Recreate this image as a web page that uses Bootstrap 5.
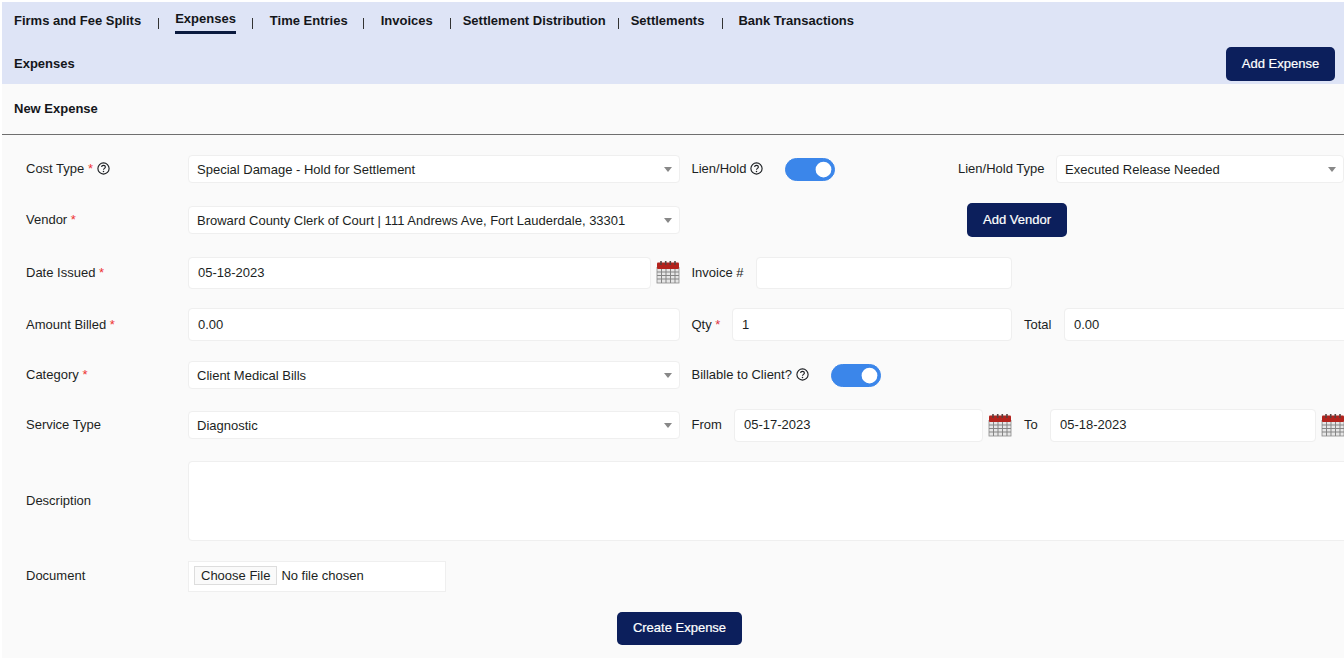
<!DOCTYPE html>
<html lang="en"><head><meta charset="utf-8"><title>New Expense</title>
<link href="https://cdn.jsdelivr.net/npm/bootstrap@5.3.0/dist/css/bootstrap.min.css" rel="stylesheet">
<style>
html,body{height:100%;overflow:hidden;background:#fff}
body{font-family:"Liberation Sans",Arial,sans-serif;font-size:13px;color:#1c1f23;padding:2px 0 2px 2px}
.topband{background:#dee4f6;height:82px;width:1342px}
.tabrow{height:38px;padding-left:12px;gap:0}
.tabrow a{font-weight:700;color:#14161a;font-size:13px;text-decoration:none;padding:0;line-height:16px;margin-top:11px}
.tabrow a.on{margin-top:9px;padding-bottom:4px;border-bottom:3px solid #0a1a3f;height:23px}
.vsep{width:1px;height:11px;background:#333;margin:16px 17px 0;flex:none}
.s1{margin-right:16px}.s2{margin-left:16px}.s3{margin-left:15px;margin-right:17px}
.s4{margin-left:17px;margin-right:12px}.s5{margin-left:12px;margin-right:12px}.s6{margin-left:18px;margin-right:15px}
.bandsub{padding:7px 9px 0 12px;height:44px;margin-top:0}
.bandsub b{margin-top:7px}
.bandsub b,.newhead{font-weight:700;font-size:13px;color:#14161a}
.navbtn{background:#0c1f5c;border:0;color:#fff;border-radius:5px;font-size:13px;font-weight:400;height:34px;padding:0;text-align:center;-webkit-text-stroke:.2px #fff}
.navbtn:hover{background:#0c1f5c;color:#fff}
.sheet{background:#fafafa;height:574px;width:1342px;overflow:hidden}
.newhead{height:51px;line-height:49px;padding-left:12px;border-bottom:1px solid #6f6f6f}
.formarea{padding-left:24px;padding-top:20px;width:1500px}
.frow{display:flex;align-items:center}
.flabel{width:162px;flex:none;color:#1c1f23}
.flabel i{color:#e33;font-style:normal}
.fmain{width:492px;flex:none}
.sel,.txt{border:1px solid #efefef;border-radius:4px;background-color:#fff;font-size:13px;color:#1c1f23;box-shadow:none;padding:0 9px}
.sel{height:28px;min-height:0;line-height:26px;padding:1px 24px 0 8px;background-image:url("data:image/svg+xml,%3Csvg xmlns='http://www.w3.org/2000/svg' viewBox='0 0 10 6'%3E%3Cpath fill='%23888' d='M0 0h10L5 6z'/%3E%3C/svg%3E");background-size:8px 5px;background-position:right 7px center}
.txt{height:33px;min-height:0}
.tog{width:50px!important;height:23px;margin:1px 0 0!important;float:none!important;background-color:#3b86ea!important;border-color:#3b86ea!important;border-radius:12px!important;box-shadow:none!important}
.qmark{width:13px;height:13px;vertical-align:-2px;margin-left:0}
.calico{width:24px;height:24px;flex:none;display:block;margin-bottom:2px}
.filebox{width:258px;height:31px;border:1px solid #efefef;background:#fff;font-size:13px;padding:4px 5px;display:block;color:#1c1f23}
.filebox::file-selector-button{background:#fafafa;border:1px solid #ddd;font-size:13px;padding:1px 6px;height:19px;line-height:15px;margin-right:4px;color:#1c1f23}
.desc{height:80px;resize:none;width:1170px;border-radius:4px}
.flt{margin-left:11.5px}
.addexp{width:109px}
.r1{height:28px}
.r2{margin-top:20px;height:34px}
.r3{margin-top:20px;height:32px}
.r3 .txt{height:32px;padding-bottom:1px}
.r3 .fmain{gap:5px}
.r4{margin-top:19px;height:33px}
.r5{margin-top:20px;height:28px}
.r6{margin-top:20px;height:33px}
.r6 .sel{margin-top:-1px}
.r6 .txt{padding-bottom:2px}
.r6 label,.r8 label{padding-bottom:2px}
.r7{margin-top:19px;height:80px}
.r8{margin-top:20px;height:31px}
.r9{margin-top:20px;padding-left:591px}
.lab-lien{width:93.5px}
.lab-type{margin-left:123px;width:98px}
.sel3{width:288px;flex:none}
.addven{width:100px;margin-left:287px}
.lab-inv{width:64.5px}
.inv{width:256px;flex:none}
.lab-qty{width:40.5px}
.qty{width:280px;flex:none}
.lab-total{width:40px;margin-left:12px}
.tot{width:300px;flex:none}
.lab-bill{width:139.5px}
.lab-from{width:42.5px}
.dfrom{width:249px;flex:none}
.cal2{margin-left:5px}
.lab-to{width:26px;margin-left:12px}
.dto{width:266px;flex:none}
.crt{width:125px;height:33px;padding-bottom:2px}
</style></head>
<body>
<svg width="0" height="0" class="d-block" style="position:absolute"><defs>
<symbol id="cal" viewBox="0 0 24 24">
<rect x="1" y="7.5" width="22" height="15.5" fill="#e6e6e6" stroke="#8a8a8a" stroke-width=".8"/>
<path d="M1 12h22M1 15.5h22M1 19h22M5.5 8v15M10 8v15M14.5 8v15M19 8v15" stroke="#858585" stroke-width="1" fill="none"/>
<rect x="1" y="2.5" width="22" height="6.5" rx="1" fill="#b3231d"/>
<path d="M5 1v4M9.7 1v4M14.3 1v4M19 1v4" stroke="#59413f" stroke-width="1.6"/>
</symbol>
<symbol id="q" viewBox="0 0 16 16">
<circle cx="8" cy="8" r="6.9" fill="none" stroke="#1c1f23" stroke-width="1.4"/>
<path d="M5.7 6.3c0-1.4 1-2.2 2.3-2.2s2.3.8 2.3 2c0 1.7-2.3 1.7-2.3 3.5" fill="none" stroke="#1c1f23" stroke-width="1.4"/>
<circle cx="8" cy="11.8" r=".95" fill="#1c1f23"/>
</symbol></defs></svg>

<header class="topband">
  <nav class="d-flex tabrow">
    <a href="#">Firms and Fee Splits</a><span class="vsep s1"></span>
    <a href="#" class="on">Expenses</a><span class="vsep s2"></span>
    <a href="#">Time Entries</a><span class="vsep s3"></span>
    <a href="#">Invoices</a><span class="vsep s4"></span>
    <a href="#">Settlement Distribution</a><span class="vsep s5"></span>
    <a href="#">Settlements</a><span class="vsep s6"></span>
    <a href="#">Bank Transactions</a>
  </nav>
  <div class="d-flex justify-content-between align-items-start bandsub">
    <b>Expenses</b>
    <button class="btn navbtn addexp" type="button">Add Expense</button>
  </div>
</header>

<main class="sheet">
  <div class="newhead">New Expense</div>
  <form class="formarea">
    <div class="frow r1">
      <label class="flabel">Cost Type <i>*</i> <svg class="qmark"><use href="#q"/></svg></label>
      <div class="fmain"><select class="form-select sel"><option>Special Damage - Hold for Settlement</option></select></div>
      <label class="flt lab-lien">Lien/Hold <svg class="qmark"><use href="#q"/></svg></label>
      <div class="form-check form-switch m-0 p-0 d-flex tg1"><input class="form-check-input tog" type="checkbox" checked></div>
      <label class="lab-type">Lien/Hold Type</label>
      <select class="form-select sel sel3"><option>Executed Release Needed</option></select>
    </div>
    <div class="frow r2">
      <label class="flabel">Vendor <i>*</i></label>
      <div class="fmain"><select class="form-select sel"><option>Broward County Clerk of Court | 111 Andrews Ave, Fort Lauderdale, 33301</option></select></div>
      <button class="btn navbtn addven" type="button">Add Vendor</button>
    </div>
    <div class="frow r3">
      <label class="flabel">Date Issued <i>*</i></label>
      <div class="fmain d-flex align-items-center">
        <input class="form-control txt flex-grow-1" value="05-18-2023"><svg class="calico"><use href="#cal"/></svg>
      </div>
      <label class="flt lab-inv">Invoice #</label>
      <input class="form-control txt inv">
    </div>
    <div class="frow r4">
      <label class="flabel">Amount Billed <i>*</i></label>
      <div class="fmain"><input class="form-control txt" value="0.00"></div>
      <label class="flt lab-qty">Qty <i class="text-danger fst-normal">*</i></label>
      <input class="form-control txt qty" value="1">
      <label class="lab-total">Total</label>
      <input class="form-control txt tot" value="0.00">
    </div>
    <div class="frow r5">
      <label class="flabel">Category <i>*</i></label>
      <div class="fmain"><select class="form-select sel"><option>Client Medical Bills</option></select></div>
      <label class="flt lab-bill">Billable to Client? <svg class="qmark"><use href="#q"/></svg></label>
      <div class="form-check form-switch m-0 p-0 d-flex"><input class="form-check-input tog" type="checkbox" checked></div>
    </div>
    <div class="frow r6">
      <label class="flabel">Service Type</label>
      <div class="fmain"><select class="form-select sel"><option>Diagnostic</option></select></div>
      <label class="flt lab-from">From</label>
      <input class="form-control txt dfrom" value="05-17-2023"><svg class="calico cal2"><use href="#cal"/></svg>
      <label class="lab-to">To</label>
      <input class="form-control txt dto" value="05-18-2023"><svg class="calico cal2"><use href="#cal"/></svg>
    </div>
    <div class="frow r7">
      <label class="flabel">Description</label>
      <textarea class="form-control txt desc"></textarea>
    </div>
    <div class="frow r8">
      <label class="flabel">Document</label>
      <input type="file" class="filebox">
    </div>
    <div class="d-flex r9"><button class="btn navbtn crt" type="button">Create Expense</button></div>
  </form>
</main>
<script src="https://cdn.jsdelivr.net/npm/bootstrap@5.3.0/dist/js/bootstrap.bundle.min.js"></script>
</body></html>
